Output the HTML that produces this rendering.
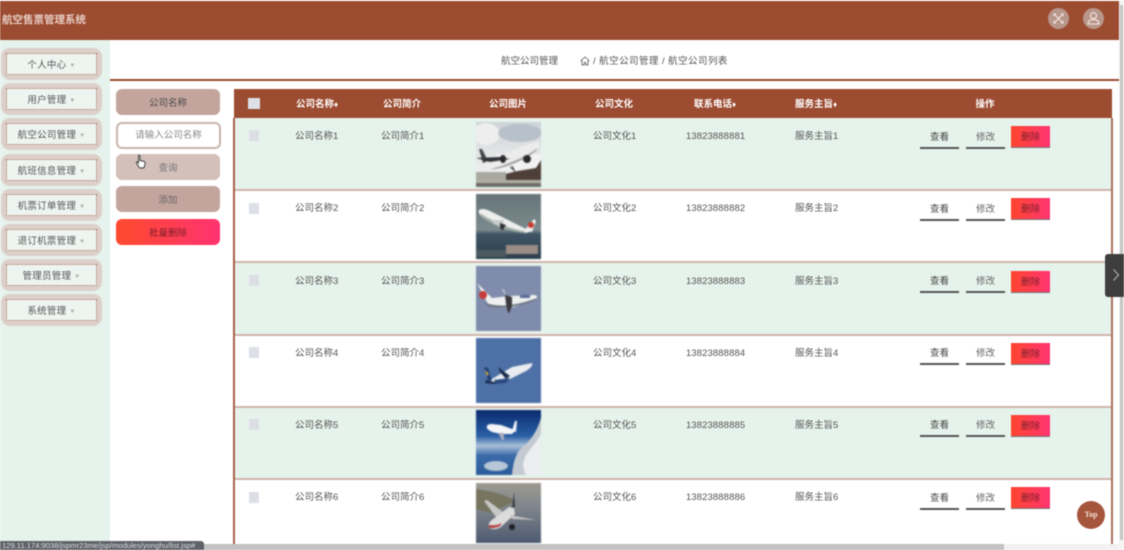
<!DOCTYPE html>
<html lang="zh">
<head>
<meta charset="utf-8">
<title>航空售票管理系统</title>
<style>
html,body{margin:0;padding:0;width:1124px;height:550px;overflow:hidden;background:#fff}
body{font-family:"Liberation Sans","Noto Sans CJK SC",sans-serif;font-size:9.5px;color:#555;position:relative}
#w{position:absolute;left:0;top:0;width:1124px;height:550px;overflow:hidden;filter:blur(.5px)}
.a{position:absolute}
.t{position:absolute;white-space:nowrap;line-height:14px}
.m{position:absolute;left:1px;width:101px;height:32px;background:#ddd0ca;border-radius:9px}
.m div{position:absolute;left:5px;top:5px;width:89px;height:20px;border:1px dotted #a0604c;background:#eef5f1;text-align:center;line-height:23px;color:#555;font-size:9.5px;letter-spacing:.25px}
.m i{font-style:normal;color:#aaa;font-size:6px;margin-left:3px;vertical-align:1px}
.f{position:absolute;left:116px;width:104px;height:26px;border-radius:6px;text-align:center;line-height:29px;font-size:9.5px;color:#4a4a4a;background:#c4a59d}
.h{position:absolute;top:98px;color:#fff;font-weight:bold;font-size:9.5px;line-height:14px;white-space:nowrap;transform:translateX(-50%)}
.h i{font-style:normal;font-size:8px;vertical-align:0}
.r{position:absolute;left:234px;width:877px;border-bottom:2px solid #cfb5ac}
.o{background:#e6f2ec}
.cb{position:absolute;left:249px;width:10px;height:11px;background:#dcdfe6}
.im{position:absolute;left:476px;width:65px;height:65px;filter:blur(.5px)}
.b{position:absolute;width:39px;height:20px;border-bottom:2px solid #555;text-align:center;line-height:22px;font-size:9.5px;color:#444}
.d{position:absolute;left:1011px;width:39px;height:21px;border-bottom:1px solid #777;background:linear-gradient(90deg,#ff4530,#ff3570);text-align:center;line-height:23px;font-size:9.5px;color:#7a1f2a}
</style>
</head>
<body>
<div id="w">
<!-- header -->
<div class="a" style="left:0;top:1px;width:1119px;height:39px;background:#9c4c31"></div>
<div class="t" style="left:2px;top:13px;color:#f0dcd3;font-size:10.5px;font-weight:bold;opacity:.9">航空售票管理系统</div>
<div class="a" style="left:1048px;top:8px;width:21px;height:21px;border-radius:50%;background:#b9968a"></div>
<svg class="a" style="left:1048px;top:8px" width="21" height="21" viewBox="0 0 21 21"><path d="M7 7l7 7M14 7l-7 7" stroke="#f3e9e5" stroke-width="1"/><path d="M5.500 5.500h3l-3 3zM15.500 5.500h-3l3 3zM5.500 15.500h3l-3-3zM15.500 15.500h-3l3-3z" fill="#f3e9e5"/></svg>
<div class="a" style="left:1083px;top:8px;width:21px;height:21px;border-radius:50%;background:#b9968a"></div>
<svg class="a" style="left:1083px;top:8px" width="21" height="21" viewBox="0 0 21 21"><circle cx="10.500" cy="7.700" r="3" fill="none" stroke="#f3e9e5" stroke-width="1.100"/><path d="M5 16c0-3 2.500-4.500 5.500-4.500s5.500 1.500 5.500 4.500z" fill="none" stroke="#f3e9e5" stroke-width="1.100"/></svg>

<!-- sidebar -->
<div class="a" style="left:0;top:40px;width:110px;height:504px;background:#e6f2ec"></div>
<div class="m" style="top:48px"><div>个人中心<i>▼</i></div></div>
<div class="m" style="top:83px"><div>用户管理<i>▼</i></div></div>
<div class="m" style="top:118px"><div>航空公司管理<i>▼</i></div></div>
<div class="m" style="top:154px"><div>航班信息管理<i>▼</i></div></div>
<div class="m" style="top:189px"><div>机票订单管理<i>▼</i></div></div>
<div class="m" style="top:224px"><div>退订机票管理<i>▼</i></div></div>
<div class="m" style="top:259px"><div>管理员管理<i>▼</i></div></div>
<div class="m" style="top:294px"><div>系统管理<i>▼</i></div></div>

<!-- breadcrumb -->
<div class="a" style="left:110px;top:79px;width:1009px;height:2px;background:#9c4c31"></div>
<div class="t" style="left:501px;top:55px">航空公司管理</div>
<svg class="a" style="left:580px;top:56px" width="10" height="10" viewBox="0 0 10 10"><path d="M.5 5L5 1l4.500 4M2 4.500V9h2.200V6.500h1.600V9H8V4.500" fill="none" stroke="#555" stroke-width=".8"/></svg>
<div class="t" style="left:593px;top:55px;letter-spacing:.45px">/ 航空公司管理 / 航空公司列表</div>

<!-- filters -->
<div class="f" style="top:89px">公司名称</div>
<div class="f" style="top:122px;left:116px;width:101px;height:23px;background:#fff;border:2px solid #c9b5ae;line-height:24px;color:#888">请输入公司名称</div>
<div class="f" style="top:154px;background:#d3c0bb;color:#777">查询</div>
<div class="f" style="top:186px;color:#666">添加</div>
<div class="f" style="top:219px;background:linear-gradient(90deg,#ff4a2e,#ff3370);color:#7a1f2a">批量删除</div>
<svg class="a" style="left:135px;top:154px" width="12" height="16" viewBox="0 0 12 16"><path d="M3.500 1.500c.8-.6 1.500 0 1.500 1v4l3.500.8c1.200.3 1.800 1 1.600 2.200l-.6 3c-.2 1-.8 1.500-1.800 1.500H5.500c-.8 0-1.300-.4-1.700-1L1.500 9c-.5-1 .5-1.700 1.300-1L3.500 9z" fill="#fff" stroke="#333" stroke-width=".9"/></svg>

<!-- table -->
<div class="a" style="left:234px;top:89px;width:878px;height:29px;background:#9c4c31"></div>
<div class="a" style="left:248px;top:98px;width:12px;height:11px;background:#dde0e6"></div>
<div class="h" style="left:317px">公司名称<i>♦</i></div>
<div class="h" style="left:402px">公司简介</div>
<div class="h" style="left:508px">公司图片</div>
<div class="h" style="left:614px">公司文化</div>
<div class="h" style="left:715px">联系电话<i>♦</i></div>
<div class="h" style="left:816px">服务主旨<i>♦</i></div>
<div class="h" style="left:985px">操作</div>

<div class="r o" style="top:118px;height:71px"></div>
<div class="r" style="top:191px;height:70px"></div>
<div class="r o" style="top:263px;height:71px"></div>
<div class="r" style="top:336px;height:70px"></div>
<div class="r o" style="top:408px;height:70px"></div>
<div class="a" style="left:233px;top:118px;width:1.500px;height:426px;background:#a9604a"></div>
<div class="a" style="left:1111px;top:118px;width:1.500px;height:426px;background:#a9705c"></div>

<!-- row 1 -->
<div class="cb" style="top:130px"></div>
<div class="t" style="left:295px;top:130px">公司名称1</div>
<div class="t" style="left:381px;top:130px">公司简介1</div>
<svg class="im" style="top:122px" viewBox="0 0 65 65"><defs><linearGradient id="s1" x1="0" y1="0" x2="0" y2="1"><stop offset="0" stop-color="#cdd3d8"/><stop offset=".5" stop-color="#e4e6e6"/><stop offset="1" stop-color="#f4f4f4"/></linearGradient></defs><rect width="65" height="65" fill="url(#s1)"/><ellipse cx="10" cy="12" rx="14" ry="11" fill="#eeeeee"/><ellipse cx="44" cy="11" rx="22" ry="9" fill="#b8c0c9"/><rect x="20" y="32" width="45" height="16" fill="#f2f2f2"/><path d="M25 53L42 49 60 46 65 38V58H25Z" fill="#4e3f38"/><rect y="50" width="30" height="8" fill="#a9a9a0"/><rect y="58" width="65" height="3" fill="#b0b0a4"/><rect y="61" width="65" height="4" fill="#6e6e68"/><path d="M63 20C60 19 50 23 40 27L12 38C6 41 5 46 9 48L20 47C35 44 50 37 60 29 63 26 64 23 63 21Z" fill="#ececec"/><path d="M14 47C28 44 48 36 62 26L60 29C50 37 35 44 20 47Z" fill="#a4a4a4"/><path d="M3 27L7 41 12 39 6 27Z" fill="#45464c"/><path d="M0 36L24 35 34 37 14 40Z" fill="#33343a"/><ellipse cx="27" cy="37" rx="3" ry="4" fill="#2a2a2e"/><ellipse cx="51" cy="37" rx="4" ry="4" fill="#2a2a2e"/><path d="M34 45L38 48M36 44L39 50" stroke="#333" stroke-width="1"/></svg>
<div class="t" style="left:593px;top:130px">公司文化1</div>
<div class="t" style="left:686px;top:130px;letter-spacing:.1px">13823888881</div>
<div class="t" style="left:795px;top:130px">服务主旨1</div>
<div class="b" style="left:920px;top:127px">查看</div>
<div class="b" style="left:966px;top:127px;color:#666">修改</div>
<div class="d" style="top:126px">删除</div>

<!-- row 2 -->
<div class="cb" style="top:203px"></div>
<div class="t" style="left:295px;top:202px">公司名称2</div>
<div class="t" style="left:381px;top:202px">公司简介2</div>
<svg class="im" style="top:194px" viewBox="0 0 65 65"><defs><linearGradient id="s2" x1="0" y1="0" x2="0" y2="1"><stop offset="0" stop-color="#67757a"/><stop offset=".55" stop-color="#7b8a8c"/><stop offset=".62" stop-color="#3e5566"/><stop offset="1" stop-color="#2d3f4c"/></linearGradient></defs><rect width="65" height="65" fill="url(#s2)"/><rect x="30" y="51" width="32" height="9" fill="#9a8c86"/><rect x="0" y="56" width="30" height="7" fill="#4b5a60"/><path d="M3 16C6 14 10 15 16 18L50 35 56 37 50 39C35 38 15 30 6 23 3 20 2 18 3 16Z" fill="#eef0ee"/><path d="M6 23C15 30 35 38 50 39L48 37C35 35 15 27 4 19Z" fill="#a9b0ac"/><path d="M48 37L58 25 60 27 56 38Z" fill="#eef0ee"/><circle cx="55" cy="31" r="3" fill="#cb3a30"/><path d="M16 26L28 26 26 34 18 30Z" fill="#c8cbc8"/><path d="M24 29L30 31 26 37 24 33Z" fill="#2d3232"/></svg>
<div class="t" style="left:593px;top:202px">公司文化2</div>
<div class="t" style="left:686px;top:202px;letter-spacing:.1px">13823888882</div>
<div class="t" style="left:795px;top:202px">服务主旨2</div>
<div class="b" style="left:920px;top:199px">查看</div>
<div class="b" style="left:966px;top:199px;color:#666">修改</div>
<div class="d" style="top:198px">删除</div>

<!-- row 3 -->
<div class="cb" style="top:275px"></div>
<div class="t" style="left:295px;top:275px">公司名称3</div>
<div class="t" style="left:381px;top:275px">公司简介3</div>
<svg class="im" style="top:266px" viewBox="0 0 65 65"><rect width="65" height="65" fill="#7f8cab"/><path d="M1 17L13 40C20 42 28 42 38 41L60 34C62 31 61 29 58 29L33 30 16 32Z" fill="#eef0f0"/><path d="M8 36C20 42 40 40 61 32L60 34C45 40 25 44 12 40Z" fill="#6c7480"/><circle cx="7" cy="29" r="4" fill="#c73c38"/><path d="M26 23L30 30 28 24Z" fill="#eee"/><path d="M29 29L36 31 36 40 33 47 32 47 30 38Z" fill="#3a3a3c"/><path d="M44 29h10v3H44z" fill="#5a6a9a"/></svg>
<div class="t" style="left:593px;top:275px">公司文化3</div>
<div class="t" style="left:686px;top:275px;letter-spacing:.1px">13823888883</div>
<div class="t" style="left:795px;top:275px">服务主旨3</div>
<div class="b" style="left:920px;top:271px">查看</div>
<div class="b" style="left:966px;top:271px;color:#666">修改</div>
<div class="d" style="top:271px">删除</div>

<!-- row 4 -->
<div class="cb" style="top:347px"></div>
<div class="t" style="left:295px;top:347px">公司名称4</div>
<div class="t" style="left:381px;top:347px">公司简介4</div>
<svg class="im" style="top:338px" viewBox="0 0 65 65"><rect width="65" height="65" fill="#4d70a6"/><path d="M56 25L36 29 16 41C13 43 14 44 17 44L32 42 50 33C55 30 57 27 56 25Z" fill="#e8ecf0"/><path d="M8 29L12 42 16 43 12 30Z" fill="#1f3f78"/><path d="M9 32L13 36 11 38Z" fill="#d8b030"/><path d="M22 29L34 38 30 41 24 34Z" fill="#1c2c50"/><path d="M10 42L22 45 18 46 9 45Z" fill="#1c2c50"/><path d="M18 42L34 40 30 45 20 46Z" fill="#2a4a80"/></svg>
<div class="t" style="left:593px;top:347px">公司文化4</div>
<div class="t" style="left:686px;top:347px;letter-spacing:.1px">13823888884</div>
<div class="t" style="left:795px;top:347px">服务主旨4</div>
<div class="b" style="left:920px;top:343px">查看</div>
<div class="b" style="left:966px;top:343px;color:#666">修改</div>
<div class="d" style="top:343px">删除</div>

<!-- row 5 -->
<div class="cb" style="top:419px"></div>
<div class="t" style="left:295px;top:419px">公司名称5</div>
<div class="t" style="left:381px;top:419px">公司简介5</div>
<svg class="im" style="top:410px" viewBox="0 0 65 65"><defs><linearGradient id="s5" x1="0" y1="0" x2="0" y2="1"><stop offset="0" stop-color="#0a2c6e"/><stop offset=".4" stop-color="#2a5fa6"/><stop offset=".55" stop-color="#a9c0d8"/><stop offset=".7" stop-color="#3a6aa8"/><stop offset="1" stop-color="#2a5c9a"/></linearGradient></defs><rect width="65" height="65" fill="url(#s5)"/><path d="M65 8C62 18 58 26 50 34 44 38 38 44 36 65H65Z" fill="#c4cad2"/><path d="M65 24C60 34 50 42 48 50 46 56 48 62 50 65H65Z" fill="#eceef0"/><ellipse cx="20" cy="56" rx="12" ry="5" fill="#b6c6d6"/><path d="M11 16C10 18 12 20 16 22L25 24 36 24 40 20 36 19 25 15 16 14C13 14 11 15 11 16Z" fill="#f4f6f8"/><path d="M36 21L39 11 41 11 40 22Z" fill="#f4f6f8"/><path d="M22 23L26 30 28 30 28 23Z" fill="#aab"/></svg>
<div class="t" style="left:593px;top:419px">公司文化5</div>
<div class="t" style="left:686px;top:419px;letter-spacing:.1px">13823888885</div>
<div class="t" style="left:795px;top:419px">服务主旨5</div>
<div class="b" style="left:920px;top:415px">查看</div>
<div class="b" style="left:966px;top:415px;color:#666">修改</div>
<div class="d" style="top:415px">删除</div>

<!-- row 6 -->
<div class="cb" style="top:492px"></div>
<div class="t" style="left:295px;top:491px">公司名称6</div>
<div class="t" style="left:381px;top:491px">公司简介6</div>
<svg class="im" style="top:483px;height:60px" viewBox="0 0 65 60" preserveAspectRatio="none"><defs><linearGradient id="s6" x1="0" y1="0" x2="0" y2="1"><stop offset="0" stop-color="#9c9a92"/><stop offset=".45" stop-color="#7c828a"/><stop offset="1" stop-color="#4d5a70"/></linearGradient></defs><rect width="65" height="60" fill="url(#s6)"/><path d="M0 6C15 8 30 12 40 18L14 30 0 26Z" fill="#77745f"/><path d="M13 44C12 40 14 38 20 34L33 24 38 25 39 31 26 43C22 47 14 47 13 44Z" fill="#dcdcdc"/><path d="M13 42C18 43 22 42 26 40L24 43C20 45 14 46 13 44Z" fill="#b2383a"/><path d="M20 34L8 18 11 17 27 29Z" fill="#c8c8c8"/><path d="M34 32L60 37 36 36Z" fill="#c4c4c4"/><path d="M36 25L38 9 39 24Z" fill="#3a3e46"/><circle cx="36" cy="44" r="3" fill="#1f2024"/></svg>
<div class="t" style="left:593px;top:491px">公司文化6</div>
<div class="t" style="left:686px;top:491px;letter-spacing:.1px">13823888886</div>
<div class="t" style="left:795px;top:491px">服务主旨6</div>
<div class="b" style="left:920px;top:488px">查看</div>
<div class="b" style="left:966px;top:488px;color:#666">修改</div>
<div class="d" style="top:487px">删除</div>

<!-- right scrollbar -->
<div class="a" style="left:1119px;top:0;width:5px;height:550px;background:#f4f4f4"></div>
<div class="a" style="left:1120px;top:5px;width:3px;height:535px;background:#c4c4c4"></div>
<!-- drawer -->
<div class="a" style="left:1105px;top:254px;width:19px;height:43px;background:#3e3e3e;border-radius:3px 0 0 3px"></div>
<svg class="a" style="left:1112px;top:268px" width="8" height="14" viewBox="0 0 8 14"><path d="M1.500 1.500L6.500 7l-5 5.500" fill="none" stroke="#aaa" stroke-width="1.200"/></svg>
<!-- top -->
<div class="a" style="left:1077px;top:501px;width:28px;height:28px;border-radius:50%;background:#a5553b;color:#f0e0d8;font:bold 8px/28px 'Liberation Serif',serif;text-align:center">Top</div>
<!-- bottom scrollbar -->
<div class="a" style="left:0;top:544px;width:1119px;height:6px;background:#f1f1f1"></div>
<div class="a" style="left:0;top:544px;width:1004px;height:6px;background:#c2c2c2"></div>
<div class="a" style="left:0;top:541px;width:204px;height:9px;background:#5f6368;border-radius:0 3px 0 0;color:#d8dadc;font-size:7.600px;line-height:10px;white-space:nowrap;overflow:hidden;padding-left:2px;box-sizing:border-box">129.11.174:9038/jspmr23me/jsp/modules/yonghu/list.jsp#</div>
</div>
</body>
</html>
